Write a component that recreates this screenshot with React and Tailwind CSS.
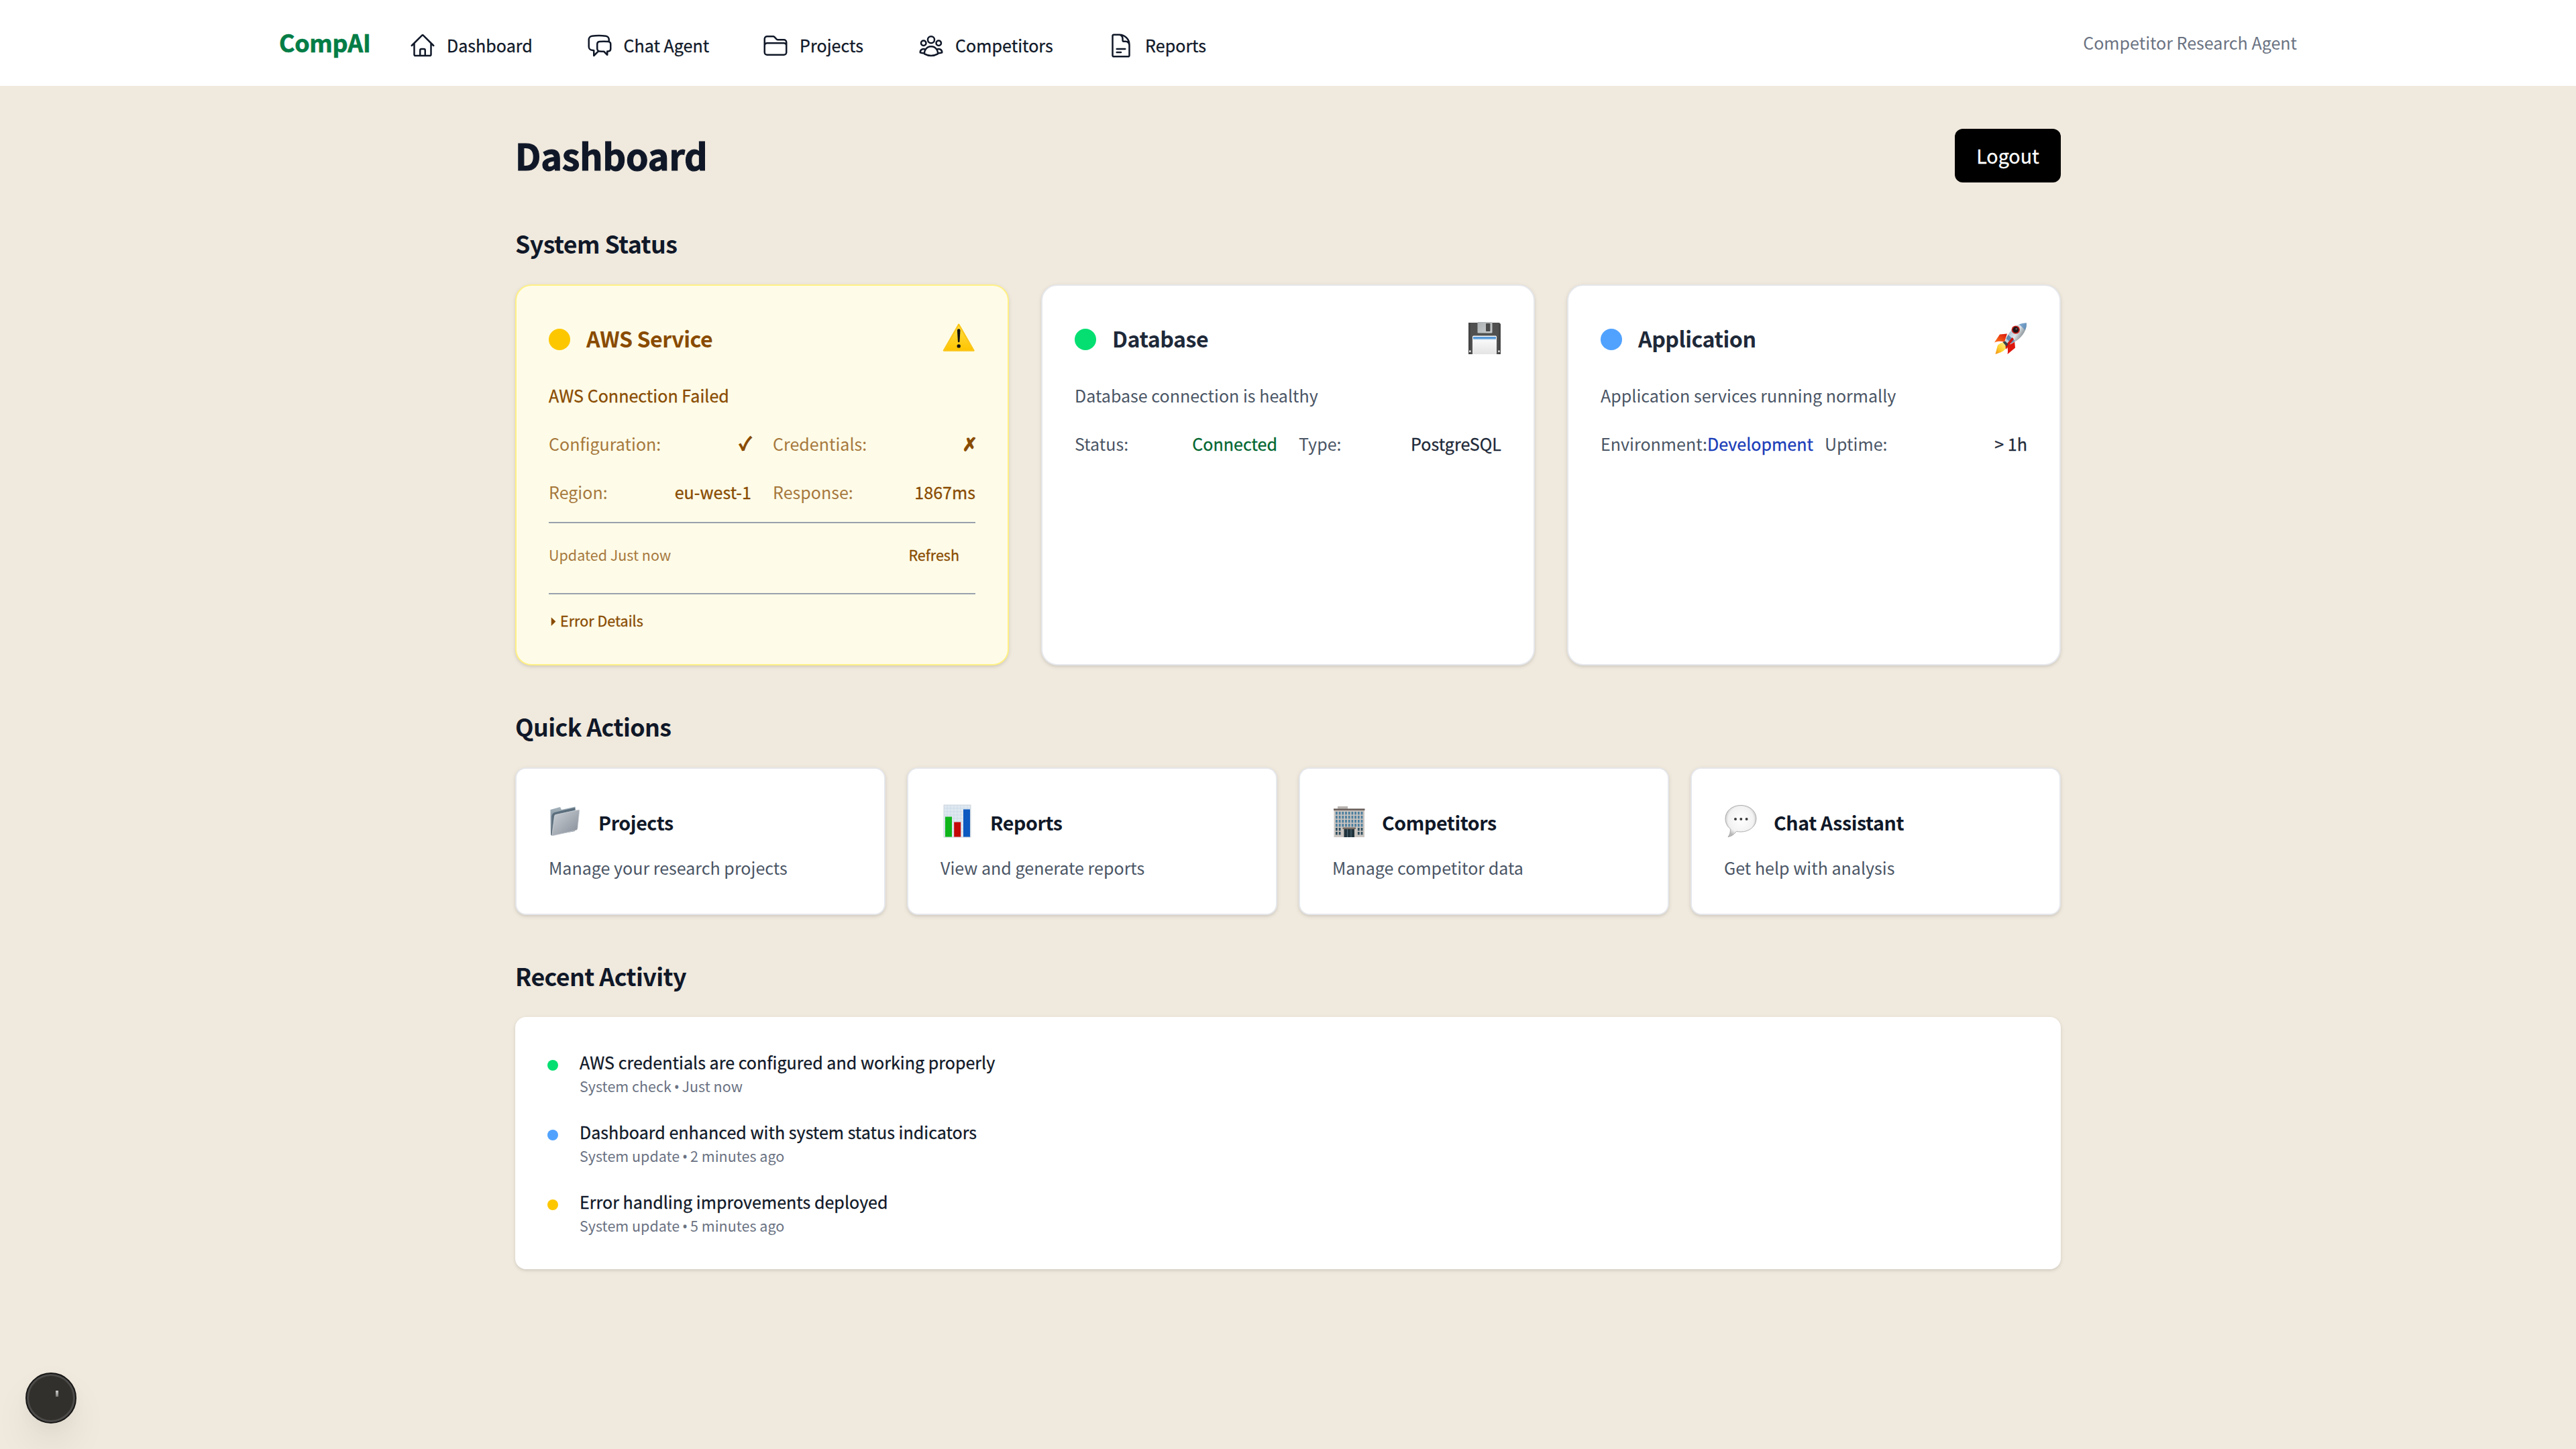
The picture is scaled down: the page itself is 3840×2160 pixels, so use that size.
import React from "react";
import {
  HiOutlineHome,
  HiOutlineChatBubbleLeftRight,
  HiOutlineFolder,
  HiOutlineUserGroup,
  HiOutlineDocumentText,
} from "react-icons/hi2";

const navItems = [
  { label: "Dashboard", Icon: HiOutlineHome, width: "w-[127.500px]" },
  { label: "Chat Agent", Icon: HiOutlineChatBubbleLeftRight, width: "w-[126.600px]" },
  { label: "Projects", Icon: HiOutlineFolder, width: "w-[96px]" },
  { label: "Competitors", Icon: HiOutlineUserGroup, width: "w-[147px]" },
  { label: "Reports", Icon: HiOutlineDocumentText, width: "w-[92px]" },
];

const medium = "[-webkit-text-stroke:0.3px] tracking-[0.02px]";

function Warning() {
  return (
    <svg viewBox="0 0 50 50" className="size-[50px]">
      <defs>
        <linearGradient id="warn" x1="0" y1="0" x2="0" y2="1">
          <stop offset="0" stopColor="#ffe04a" />
          <stop offset="1" stopColor="#ffc400" />
        </linearGradient>
      </defs>
      <path d="M25.2 4.6 L47.6 43.6 H2.8 Z" fill="url(#warn)" stroke="#fbc61a" strokeWidth="2.2" strokeLinejoin="round" />
      <path d="M22.9 13.6 a2.3 2.3 0 0 1 4.6 0 L26.5 30 a1.3 1.3 0 0 1 -2.6 0 Z" fill="#111" />
      <circle cx="25.2" cy="36.9" r="2.7" fill="#111" />
    </svg>
  );
}

function Floppy() {
  return (
    <svg viewBox="0 0 50 50" className="size-[50px]">
      <defs>
        <linearGradient id="flopLabel" x1="0" y1="0" x2="0" y2="1">
          <stop offset="0" stopColor="#fff" />
          <stop offset="1" stopColor="#e4e4e4" />
        </linearGradient>
        <linearGradient id="flopMetal" x1="0" y1="0" x2="1" y2="1">
          <stop offset="0" stopColor="#aeb1b3" />
          <stop offset="1" stopColor="#c9cccd" />
        </linearGradient>
      </defs>
      <path d="M1 2 H47 L49 4 V49 H1 Z" fill="#505050" />
      <path d="M1 2 H4 V49 H1 Z M46 4 H49 V49 H46 Z" fill="#454545" />
      <rect x="14.5" y="1" width="22" height="16.5" rx="1" fill="url(#flopMetal)" />
      <rect x="27" y="3" width="6.5" height="12" rx="0.8" fill="#4a4a4a" />
      <path d="M7 23 a1.5 1.5 0 0 1 1.5 -1.5 H41.5 a1.5 1.5 0 0 1 1.5 1.5 V49 H7 Z" fill="url(#flopLabel)" />
      <rect x="8" y="23" width="34" height="3.6" fill="#5597d6" />
      <rect x="8" y="26.6" width="34" height="0.8" fill="#bcd8f0" />
      <rect x="2.2" y="43.4" width="2.2" height="2.6" fill="#fff" />
      <rect x="45.4" y="43.4" width="2.2" height="2.6" fill="#fff" />
    </svg>
  );
}

function Rocket() {
  return (
    <svg viewBox="0 0 50 50" className="size-[50px]">
      <defs>
        <linearGradient id="rocketBody" x1="0" y1="0" x2="1" y2="0.6">
          <stop offset="0" stopColor="#3f78ad" />
          <stop offset="0.4" stopColor="#b9cddb" />
          <stop offset="0.6" stopColor="#dfe4e6" />
          <stop offset="1" stopColor="#59666f" />
        </linearGradient>
        <linearGradient id="rocketFin" x1="1" y1="0" x2="0" y2="1">
          <stop offset="0" stopColor="#d8150c" />
          <stop offset="1" stopColor="#ff7a1c" />
        </linearGradient>
        <linearGradient id="rocketFlame" x1="1" y1="0" x2="0" y2="1">
          <stop offset="0" stopColor="#fff59a" />
          <stop offset="0.6" stopColor="#ffcf2b" />
          <stop offset="1" stopColor="#f08a12" />
        </linearGradient>
      </defs>
      <path d="M20 18.500 L9 19.500 L1 31.500 Q8 28.500 16 31 Z" fill="url(#rocketFin)" />
      <path d="M31 29 L32 39.500 L20.500 49 Q22 42 19.500 36 Z" fill="#dd170e" />
      <path d="M14.500 31 Q5 33 4.500 41 L2.500 49 L11 46 Q18 43 20 36 Z" fill="url(#rocketFlame)" />
      <path d="M49 2.500 Q39 2 31 8.500 Q21 17 16.500 31 L21.500 35.500 Q36 30 43.500 19.500 Q49.500 11 49 2.500 Z" fill="url(#rocketBody)" />
      <path d="M49 2.500 Q43 2.300 38 4.500 L46.800 13 Q49.300 8 49 2.500 Z" fill="#4d88c0" opacity="0.7" />
      <path d="M21.500 20 L31.500 29.300 L26 33 L18.500 25.500 Z" fill="#3f73a5" opacity="0.75" />
      <path d="M27.500 24 L30 26.500 L18 42 L17.500 36 Z" fill="#d0150d" />
      <path d="M13.500 31 L17 29.500 L21.500 34 L19 37.500 Z" fill="#39424a" />
      <circle cx="32.800" cy="12.600" r="6.200" fill="#c9231b" />
      <circle cx="32.800" cy="12.600" r="4.500" fill="#1d1416" />
      <circle cx="33.800" cy="11.300" r="1.400" fill="#6c5156" />
    </svg>
  );
}

function FolderEmoji() {
  return (
    <svg viewBox="0 0 50 50" className="size-[50px]">
      <defs>
        <linearGradient id="folderFront" x1="0" y1="0" x2="1" y2="1">
          <stop offset="0" stopColor="#cdd2d8" />
          <stop offset="0.5" stopColor="#a9afb7" />
          <stop offset="1" stopColor="#858b95" />
        </linearGradient>
        <linearGradient id="folderBack" x1="0" y1="0" x2="0" y2="1">
          <stop offset="0" stopColor="#a5b3bd" />
          <stop offset="1" stopColor="#5c6c79" />
        </linearGradient>
      </defs>
      <path d="M2.500 8 L17 4 L19 8 L39.500 3.500 L40.500 9 L39 40 L5 46.500 Q3 47 3 44 Z" fill="url(#folderBack)" />
      <path d="M19 9.500 L39 5 V9 L9 15.500 L5.500 38 L4.500 18 Q5 13 9 12 Z" fill="#5b6e7d" />
      <path
        d="M10.500 15.500 L44.500 8.200 Q46 8 45.800 9.500 L43 36 Q42.800 38 41 38.600 L6.500 46.800 Q4.800 47 5 45.400 L8.500 17.500 Q8.800 15.900 10.500 15.500 Z"
        fill="url(#folderFront)"
        stroke="#d6dade"
        strokeWidth="0.7"
      />
    </svg>
  );
}

function ChartEmoji() {
  return (
    <svg viewBox="0 0 50 50" className="size-[50px]">
      <rect x="5" y="1" width="40" height="48" fill="#dfe8f0" stroke="#c3cbd2" strokeWidth="0.8" />
      <path
        d="M5 6H45M5 11H45M5 16H45M5 21H45M5 26H45M5 31H45M5 36H45M5 41H45M10 1V49M15 1V49M20 1V49M25 1V49M30 1V49M35 1V49M40 1V49"
        stroke="#c7d8e8"
        strokeWidth="0.7"
      />
      <rect x="7" y="18.500" width="10" height="30" fill="#10b51c" />
      <rect x="20.200" y="26.500" width="10" height="22" fill="#c40808" />
      <rect x="34" y="7.500" width="10" height="41" fill="#0b58c0" />
    </svg>
  );
}

const windowRows = [11, 17, 23, 29, 35, 41];
const windowCols = [5, 9.7, 14.4, 19.1, 23.8, 28.5, 33.2, 37.9, 42.6];

function OfficeEmoji() {
  return (
    <svg viewBox="0 0 50 50" className="size-[50px]">
      <rect x="8" y="3" width="15" height="5" fill="#b9b3b0" />
      <rect x="2.500" y="6.500" width="45.500" height="42.500" fill="#cac5c1" />
      <rect x="2" y="6.500" width="46.500" height="2.600" fill="#6b605d" />
      {windowRows.map((y, r) =>
        windowCols.map((x, c) =>
          r > 3 && c > 1 && c < 7 ? null : (
            <rect key={`${r}-${c}`} x={x} y={y} width="2.800" height="4.400" fill={r > 3 ? "#2f4e5e" : "#4c7f9e"} />
          )
        )
      )}
      <rect x="15.500" y="34.500" width="19.500" height="2.500" fill="#75695f" />
      <rect x="17.500" y="37" width="15.500" height="12" fill="#22343d" />
      <path d="M22.500 37V49M28 37V49" stroke="#5b7b88" strokeWidth="0.900" />
    </svg>
  );
}

function ChatEmoji() {
  return (
    <svg viewBox="0 0 50 50" className="size-[50px]">
      <defs>
        <radialGradient id="bubble" cx="0.5" cy="0.45" r="0.55">
          <stop offset="0" stopColor="#fff" />
          <stop offset="0.75" stopColor="#f2f2f2" />
          <stop offset="1" stopColor="#b8b8b8" />
        </radialGradient>
      </defs>
      <path
        d="M25 1.500 C38 1.500 48 10 48 21.300 C48 32.500 38 41 25 41 C22.500 41 20.500 40.800 18.500 40.200 C15 45 10.500 48 6 48.500 C8.500 45.500 9.800 41.500 9.300 36.500 C4.600 32.800 2 27.500 2 21.300 C2 10 12 1.500 25 1.500 Z"
        fill="url(#bubble)"
        stroke="#a6a6a6"
        strokeWidth="0.900"
      />
      <circle cx="17" cy="22" r="2" fill="#3c3c3c" />
      <circle cx="25.300" cy="22" r="2" fill="#3c3c3c" />
      <circle cx="33.600" cy="22" r="2" fill="#3c3c3c" />
    </svg>
  );
}

function Emoji({ children }) {
  return <div className="flex h-16 w-[50px] shrink-0 items-start pt-[5px]">{children}</div>;
}

function SectionTitle({ children }) {
  return (
    <h2 className="mb-8 pb-[3px] text-[35.8px] leading-[53px] font-semibold tracking-[-0.6px] text-gray-900">{children}</h2>
  );
}

function Row({ label, value, labelClass, valueClass }) {
  return (
    <div className="flex justify-between pb-[2px] text-[25.05px] leading-[38px] whitespace-nowrap">
      <span className={labelClass}>{label}</span>
      <span className={valueClass}>{value}</span>
    </div>
  );
}

function StatusCard({ title, dot, icon, message, card, titleClass, messageClass, children }) {
  return (
    <div className={`rounded-3xl border-2 p-12 shadow-[0_2px_6px_rgba(0,0,0,0.1),0_2px_4px_-2px_rgba(0,0,0,0.1)] ${card}`}>
      <div className="mb-8 flex items-center justify-between">
        <div className="flex items-center gap-6">
          <div className={`size-8 rounded-full ${dot}`} />
          <h3 className={`pb-[3px] text-[32.2px] leading-[53px] font-semibold tracking-[-0.5px] ${titleClass}`}>{title}</h3>
        </div>
        <Emoji>{icon}</Emoji>
      </div>
      <p className={`mb-8 pb-[2px] text-[25.05px] leading-[38px] ${messageClass}`}>{message}</p>
      {children}
    </div>
  );
}

const actions = [
  { title: "Projects", text: "Manage your research projects", icon: <FolderEmoji /> },
  { title: "Reports", text: "View and generate reports", icon: <ChartEmoji /> },
  { title: "Competitors", text: "Manage competitor data", icon: <OfficeEmoji /> },
  { title: "Chat Assistant", text: "Get help with analysis", icon: <ChatEmoji /> },
];

const activity = [
  { dot: "bg-green-400", title: "AWS credentials are configured and working properly", source: "System check", time: "Just now" },
  { dot: "bg-blue-400", title: "Dashboard enhanced with system status indicators", source: "System update", time: "2 minutes ago" },
  { dot: "bg-yellow-400", title: "Error handling improvements deployed", source: "System update", time: "5 minutes ago" },
];

export default function App() {
  const muted = "text-gray-600";
  const strong = `${medium} text-gray-800`;
  const warnMuted = "text-yellow-800 opacity-75";
  const warnStrong = `${medium} text-yellow-800`;
  return (
    <div className="h-[2160px] w-[3840px] overflow-hidden bg-[#f0e9dd] font-['Noto_Sans_CJK_SC','Noto_Sans_CJK_JP',sans-serif]">
      <header className="h-32 bg-white">
        <div className="mx-auto flex h-full w-[3008px] items-center justify-between">
          <div className="flex h-full items-center">
            <div className="mr-8 w-[138px] pb-[4px] text-[35.8px] leading-[52px] font-bold tracking-[-0.3px] whitespace-nowrap text-[#047d46] [-webkit-text-stroke:0.7px]">
              CompAI
            </div>
            <nav className="flex items-center gap-8 pt-2">
              {navItems.map(({ label, Icon, width }) => (
                <a key={label} className="flex items-center gap-4 px-6 text-gray-900">
                  <Icon className="size-10" />
                  <span className={`pb-[2px] text-[25.05px] leading-[38px] whitespace-nowrap ${medium} ${width}`}>
                    {label}
                  </span>
                </a>
              ))}
            </nav>
          </div>
          <div className="pb-[2px] text-[25.05px] leading-[38px] text-gray-500">Competitor Research Agent</div>
        </div>
      </header>

      <main className="mx-auto w-[2304px] pt-16">
        <div className="mb-16 flex h-20 items-center justify-between">
          <h1 className="pb-[3px] text-[53.700px] leading-[69px] font-bold tracking-[-0.1px] text-gray-900 [-webkit-text-stroke:1.2px]">
            Dashboard
          </h1>
          <button className="flex h-20 w-[158px] items-center justify-center rounded-[12px] bg-black text-[28.600px] leading-[48px] text-white [-webkit-text-stroke:0.3px]">
            Logout
          </button>
        </div>

        <section className="mb-16">
          <SectionTitle>System Status</SectionTitle>
          <div className="grid grid-cols-3 gap-12">
            <StatusCard
              title="AWS Service"
              dot="bg-yellow-400"
              icon={<Warning />}
              message="AWS Connection Failed"
              card="border-yellow-200 bg-yellow-50"
              titleClass="text-yellow-800"
              messageClass={warnStrong}
            >
              <div className="mb-6 grid grid-cols-2 gap-8">
                <Row
                  label="Configuration:"
                  value="✓"
                  labelClass={warnMuted}
                  valueClass="h-[38px] text-[26px] leading-[36px] text-yellow-800 [-webkit-text-stroke:1.8px]"
                />
                <Row
                  label="Credentials:"
                  value="✗"
                  labelClass={warnMuted}
                  valueClass="-mr-[3px] h-[38px] pt-[2px] font-['DejaVu_Sans'] text-[27px] text-yellow-800 [-webkit-text-stroke:1.3px]"
                />
                <Row label="Region:" value="eu-west-1" labelClass={warnMuted} valueClass={warnStrong} />
                <Row label="Response:" value="1867ms" labelClass={warnMuted} valueClass={warnStrong} />
              </div>
              <div className="mb-8 flex items-center justify-between border-t-2 border-gray-400 pt-6 text-[21.500px] leading-[46px]">
                <span className="pb-[2px] text-yellow-800 opacity-75">Updated Just now</span>
                <span className={`pr-6 pb-[2px] ${warnStrong}`}>Refresh</span>
              </div>
              <div className="flex items-center border-t-2 border-gray-400 pt-6 text-yellow-800">
                <svg viewBox="0 0 18 32" className="h-8 w-[17px]">
                  <path d="M4 10 L11 16.500 L4 23.500 Z" fill="currentColor" />
                </svg>
                <span className={`pb-[2px] text-[21.500px] leading-[30px] ${medium}`}>Error Details</span>
              </div>
            </StatusCard>

            <StatusCard
              title="Database"
              dot="bg-green-400"
              icon={<Floppy />}
              message="Database connection is healthy"
              card="border-gray-200 bg-white"
              titleClass="text-gray-800"
              messageClass="text-gray-600"
            >
              <div className="grid grid-cols-2 gap-8">
                <Row label="Status:" value="Connected" labelClass={muted} valueClass={`${medium} text-green-800`} />
                <Row label="Type:" value="PostgreSQL" labelClass={muted} valueClass={strong} />
              </div>
            </StatusCard>

            <StatusCard
              title="Application"
              dot="bg-blue-400"
              icon={<Rocket />}
              message="Application services running normally"
              card="border-gray-200 bg-white"
              titleClass="text-gray-800"
              messageClass="text-gray-600"
            >
              <div className="grid grid-cols-2 gap-8">
                <Row label="Environment:" value="Development" labelClass={muted} valueClass={`${medium} text-blue-800`} />
                <Row label="Uptime:" value="> 1h" labelClass={muted} valueClass={strong} />
              </div>
            </StatusCard>
          </div>
        </section>

        <section className="mb-16">
          <SectionTitle>Quick Actions</SectionTitle>
          <div className="grid grid-cols-4 gap-8">
            {actions.map((a) => (
              <div
                key={a.title}
                className="rounded-2xl border-2 border-gray-200 bg-white p-12 shadow-[0_2px_6px_rgba(0,0,0,0.1),0_2px_4px_-2px_rgba(0,0,0,0.1)]"
              >
                <div className="mb-4 flex items-center gap-6">
                  <Emoji>{a.icon}</Emoji>
                  <h3 className="text-[28.600px] leading-[48px] font-semibold tracking-[-0.42px] text-gray-900">{a.title}</h3>
                </div>
                <p className="pb-[2px] text-[25.050px] leading-[38px] text-gray-600">{a.text}</p>
              </div>
            ))}
          </div>
        </section>

        <section>
          <SectionTitle>Recent Activity</SectionTitle>
          <div className="flex flex-col gap-8 rounded-2xl bg-white p-12 shadow-[0_2px_6px_rgba(0,0,0,0.1),0_2px_4px_-2px_rgba(0,0,0,0.1)]">
            {activity.map((a) => (
              <div key={a.title} className="flex items-start gap-8">
                <div className={`mt-4 size-4 rounded-full ${a.dot}`} />
                <div>
                  <p className={`pb-[2px] text-[25.050px] leading-[38px] text-gray-900 ${medium}`}>{a.title}</p>
                  <p className="h-8 pb-[2px] text-[21.500px] leading-[30px] text-gray-500">
                    {a.source} <span className="-mx-px font-['Noto_Sans']">•</span> {a.time}
                  </p>
                </div>
              </div>
            ))}
          </div>
        </section>
      </main>

      <div className="fixed bottom-[38px] left-[38px] size-[76px] rounded-full border-2 border-[#171717] bg-[#32302c] shadow-[inset_0_0_0_3px_#4c4b49,0_32px_64px_-16px_rgba(0,0,0,0.2),0_8px_32px_rgba(0,0,0,0.04)]">
        <div className="mt-[25px] ml-[43px] h-[9px] w-[4px] bg-linear-to-b from-[#cfcfcf] to-[#7b7a78]" />
      </div>
    </div>
  );
}
